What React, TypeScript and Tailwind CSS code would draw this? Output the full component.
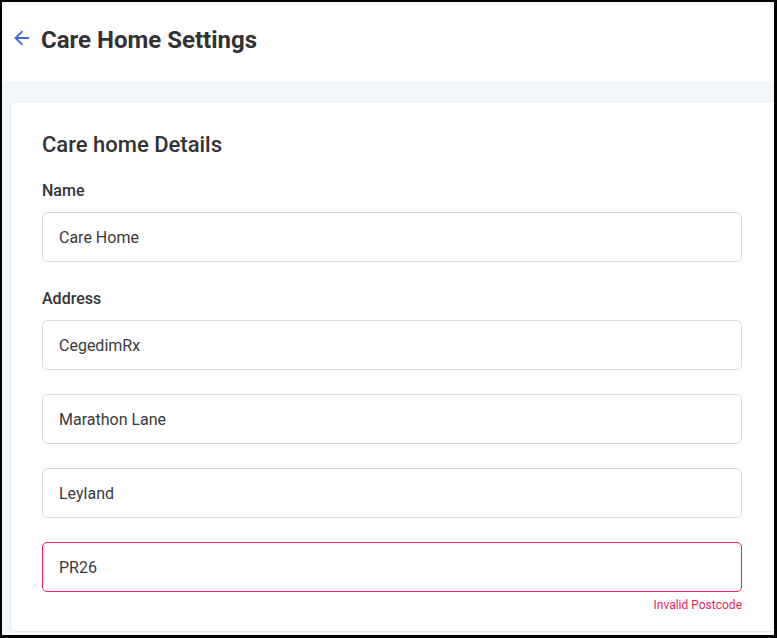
import { ArrowLeft } from "lucide-react";

const Field = ({ value, error }: { value: string; error?: boolean }) => {
  return (
    <div
      className={`h-[50px] w-full rounded-[5px] border bg-white flex items-center px-4 pt-[2px] text-[16px] text-[#3a3a3a] ${
        error ? "border-[#ea1f63]" : "border-[#dcdcdc]"
      }`}
    >
      {value}
    </div>
  );
};

const App = () => {
  return (
    <div
      className="w-[777px] h-[638px] overflow-hidden border-black border-l-2 border-t-2 border-r-[3px] border-b-[3px] bg-[#f4f7fb] flex flex-col"
      style={{ fontFamily: "Roboto, 'Liberation Sans', sans-serif" }}
    >
      <div className="h-[79px] shrink-0 bg-white flex items-center">
        <div className="flex items-center pl-[9px] -mt-[4px]">
          <ArrowLeft className="w-[22px] h-[22px] text-[#4466e0] -mt-[4px]" strokeWidth={2} />
          <h1 className="ml-[8px] text-[24px] font-bold text-[#333333]">Care Home Settings</h1>
        </div>
      </div>

      <div className="flex-1 pt-[20px] pl-[8px] pb-[3px] min-h-0">
        <div className="h-full w-[780px] bg-white border border-[#e6eaf1] rounded-[6px] pt-[29px] pl-[31px]">
          <div className="w-[700px]">
            <h2 className="text-[22px] leading-[28px] font-medium text-[#333333]">Care home Details</h2>

            <label className="block mt-[22px] mb-[11px] text-[16px] leading-[20px] font-medium text-[#333333]">
              Name
            </label>
            <Field value="Care Home" />

            <label className="block mt-[27px] mb-[11px] text-[16px] leading-[20px] font-medium text-[#333333]">
              Address
            </label>
            <div className="flex flex-col gap-[24px]">
              <Field value="CegedimRx" />
              <Field value="Marathon Lane" />
              <Field value="Leyland" />
              <Field value="PR26" error />
            </div>
            <p className="mt-[5px] text-right text-[12px] leading-[16px] text-[#ea1f63]">Invalid Postcode</p>
          </div>
        </div>
      </div>
    </div>
  );
};

export default App;
